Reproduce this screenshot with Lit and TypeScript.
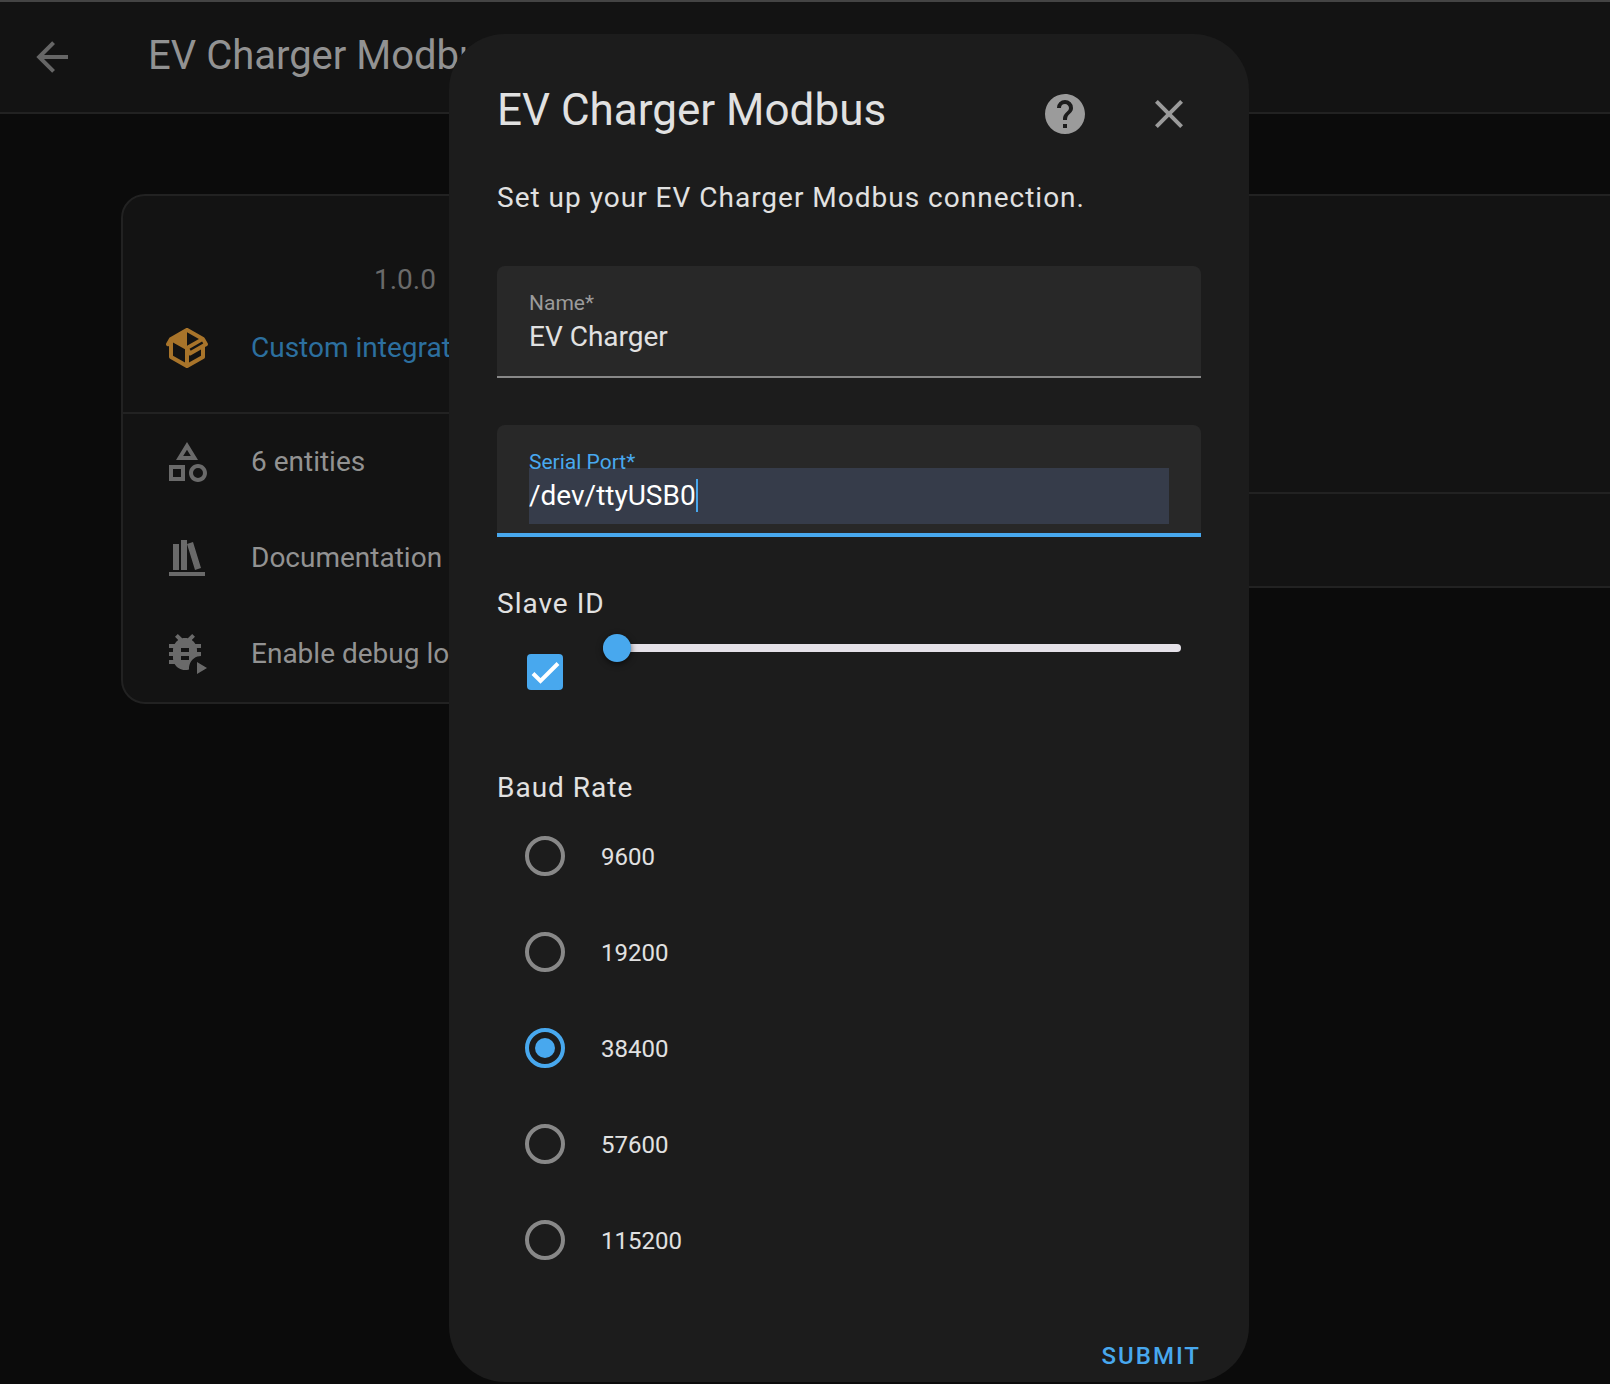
import { LitElement, html, css, svg } from "lit";
import { customElement, state } from "lit/decorators.js";

const ICONS = {
  back: "M20,11V13H8L13.5,18.5L12.08,19.92L4.16,12L12.08,4.08L13.5,5.5L8,11H20Z",
  help: "M15.07,11.25L14.17,12.17C13.45,12.89 13,13.5 13,15H11V14.5C11,13.39 11.45,12.39 12.17,11.67L13.41,10.41C13.78,10.05 14,9.55 14,9C14,7.89 13.1,7 12,7A2,2 0 0,0 10,9H8A4,4 0 0,1 12,5A4,4 0 0,1 16,9C16,9.88 15.64,10.67 15.07,11.25M13,19H11V17H13M12,2A10,10 0 0,0 2,12A10,10 0 0,0 12,22A10,10 0 0,0 22,12C22,6.47 17.5,2 12,2Z",
  close: "M19,6.41L17.59,5L12,10.59L6.41,5L5,6.41L10.59,12L5,17.59L6.41,19L12,13.41L17.59,19L19,17.59L13.41,12L19,6.41Z",
  package: "M2,10.96C1.5,10.68 1.35,10.07 1.63,9.59L3.13,7C3.24,6.8 3.41,6.66 3.6,6.58L11.43,2.18C11.59,2.06 11.79,2 12,2C12.21,2 12.41,2.06 12.57,2.18L20.47,6.62C20.66,6.72 20.82,6.88 20.91,7.08L22.36,9.6C22.64,10.08 22.47,10.69 22,10.96L21,11.54V16.5C21,16.88 20.79,17.21 20.47,17.38L12.57,21.82C12.41,21.94 12.21,22 12,22C11.79,22 11.59,21.94 11.43,21.82L3.53,17.38C3.21,17.21 3,16.88 3,16.5V10.96C2.7,11.13 2.32,11.14 2,10.96M12,4.15V4.15L12,10.85V10.85L17.96,7.5L12,4.15M5,15.91L11,19.29V12.58L5,9.21V15.91M19,15.91V12.69L14,15.59C13.67,15.77 13.3,15.76 13,15.6V19.29L19,15.91M13.85,13.36L20.13,9.73L19.55,8.72L13.27,12.35L13.85,13.36Z",
  shapes: "M11,13.5V21.5H3V13.5H11M9,15.5H5V19.5H9V15.5M12,2L17.5,11H6.5L12,2M12,5.86L10.08,9H13.92L12,5.86M17.5,13C20,13 22,15 22,17.5C22,20 20,22 17.5,22C15,22 13,20 13,17.5C13,15 15,13 17.5,13M17.5,15A2.5,2.5 0 0,0 15,17.5A2.5,2.5 0 0,0 17.5,20A2.5,2.5 0 0,0 20,17.5A2.5,2.5 0 0,0 17.5,15Z",
  books: "M9 3V18H12V3H9ZM12 5L16 18L19 17L15 4L12 5ZM5 5V18H8V5H5ZM3 19V21H21V19H3Z",
  bug: "M13,11H9V9H13ZM13,15H9V13H13ZM19,7H16.19C15.74,6.22 15.12,5.55 14.37,5.04L16,3.41L14.59,2L12.42,4.17C11.96,4.06 11.5,4 11,4C10.5,4 10.04,4.06 9.59,4.17L7.41,2L6,3.41L7.62,5.04C6.88,5.55 6.26,6.22 5.81,7H3V9H5.09C5.04,9.33 5,9.66 5,10V11H3V13H5V14C5,14.34 5.04,14.67 5.09,15H3V17H5.81C6.85,18.79 8.78,20 11,20C11.7,20 12.4,19.9 13,19.7C12.9,16.6 14.6,14.2 17.2,13.3C17.8,13.1 18.4,13 19,13V11H17V10C17,9.66 16.96,9.33 16.91,9H19V7ZM17,16V22L22,19Z",
};

const icon = (name: keyof typeof ICONS) => html`
  <svg class="icon" viewBox="0 0 24 24" aria-hidden="true">
    ${svg`<path fill="currentColor" fill-rule="evenodd" d=${ICONS[name]} />`}
  </svg>
`;

@customElement("integration-page")
class IntegrationPage extends LitElement {
  static styles = css`
    :host {
      display: block;
      color: #929292;
      font-size: 28px;
      line-height: 32px;
    }
    .icon {
      display: block;
      width: 48px;
      height: 48px;
      flex: none;
    }
    .toolbar {
      display: flex;
      align-items: center;
      gap: 72px;
      box-sizing: border-box;
      height: 114px;
      padding: 0 28px;
      background: #131313;
      border-top: 2px solid #444;
      border-bottom: 2px solid #222;
    }
    .back {
      padding: 0;
      border: 0;
      background: none;
      color: #666;
    }
    .heading {
      margin: 0;
      padding-bottom: 2px;
      font-size: 40px;
      font-weight: 400;
      line-height: 48px;
      white-space: nowrap;
    }
    .content {
      display: grid;
      grid-template-columns: minmax(0, 568px) minmax(0, 1fr);
      gap: 32px;
      align-items: start;
      padding: 80px 0 0 121px;
    }
    .card {
      background: #131313;
      border: 2px solid #222;
      border-radius: 24px;
      white-space: nowrap;
      overflow: hidden;
    }
    .wide {
      border-right: 0;
      border-radius: 24px 0 0 24px;
    }
    .intro {
      padding: 68px 0 16px;
      border-bottom: 2px solid #222;
    }
    .version {
      margin: 0;
      text-align: center;
      color: #6a6a6a;
    }
    .row {
      display: flex;
      align-items: center;
      gap: 40px;
      height: 96px;
      padding: 0 40px;
      color: inherit;
      text-decoration: none;
    }
    .row .icon {
      color: #6a6a6a;
    }
    .intro .row {
      padding-top: 4px;
      color: #2c6f9f;
    }
    .intro .icon {
      color: #a8742a;
    }
    .summary {
      height: 296px;
      border-bottom: 2px solid #222;
    }
    .entry {
      height: 92px;
    }
  `;

  render() {
    return html`
      <header class="toolbar">
        <button class="back" type="button" aria-label="Back">${icon("back")}</button>
        <h1 class="heading">EV Charger Modbus</h1>
      </header>
      <main class="content">
        <section class="card">
          <div class="intro">
            <p class="version">1.0.0</p>
            <a class="row" href="#custom">${icon("package")}<span>Custom integration</span></a>
          </div>
          <a class="row" href="#entities">${icon("shapes")}<span>6 entities</span></a>
          <a class="row" href="#docs">${icon("books")}<span>Documentation</span></a>
          <a class="row" href="#debug">${icon("bug")}<span>Enable debug logging</span></a>
        </section>
        <section class="card wide">
          <div class="summary"></div>
          <div class="entry"></div>
        </section>
      </main>
    `;
  }
}

@customElement("config-dialog")
class ConfigDialog extends LitElement {
  @state() private baud = "38400";

  private rates = ["9600", "19200", "38400", "57600", "115200"];

  static styles = css`
    :host {
      display: block;
      box-sizing: border-box;
      width: 800px;
      max-width: 100%;
      padding-top: 32px;
      background: #1c1c1c;
      border-radius: 56px;
      color: #e1e1e1;
      font-size: 28px;
      line-height: 32px;
      letter-spacing: 1px;
    }
    .icon {
      display: block;
      width: 48px;
      height: 48px;
    }
    .header {
      display: flex;
      align-items: flex-start;
      gap: 8px;
      padding: 0 32px 0 48px;
    }
    .title {
      flex: 1;
      margin: 0;
      font-size: 44px;
      font-weight: 400;
      line-height: 88px;
      letter-spacing: normal;
    }
    .tool {
      padding: 24px;
      border: 0;
      background: none;
      color: #9b9b9b;
    }
    .form {
      padding: 12px 48px 0;
    }
    .description {
      margin: 0 0 44px;
      line-height: 48px;
    }
    .field {
      box-sizing: border-box;
      height: 112px;
      margin-bottom: 47px;
      padding: 25px 32px 0;
      background: #282828;
      border-bottom: 2px solid #888;
      border-radius: 8px 8px 0 0;
      letter-spacing: normal;
    }
    .field-label {
      display: block;
      position: relative;
      margin-bottom: -6px;
      color: #9b9b9b;
      font-size: 21px;
      line-height: 24px;
    }
    .value {
      display: flex;
      align-items: center;
      box-sizing: border-box;
      height: 56px;
      padding-bottom: 2px;
    }
    .text {
      box-sizing: border-box;
      width: 100%;
      height: 33px;
      padding: 0;
      border: 0;
      outline: 0;
      background: none;
      color: inherit;
      font: inherit;
    }
    .active {
      border-bottom: 4px solid #48a8ee;
    }
    .active .field-label {
      color: #48a8ee;
    }
    .active .value {
      background: #363c4a;
      color: #fff;
    }
    .active .text {
      width: auto;
      field-sizing: content;
      border-right: 2px solid #48a8ee;
    }
    .group {
      margin: 0;
      padding: 0;
      border: 0;
    }
    .group-label {
      display: block;
      padding: 0;
    }
    .slave {
      padding-top: 4px;
    }
    .slave-row {
      display: flex;
      align-items: flex-start;
      gap: 40px;
      padding: 0 20px 82px 30px;
    }
    .check {
      display: grid;
      flex: none;
      width: 36px;
      height: 36px;
      margin-top: 34px;
    }
    .check-box,
    .check-mark {
      grid-area: 1 / 1;
      width: 36px;
      height: 36px;
      margin: 0;
    }
    .check-box {
      appearance: none;
      box-sizing: border-box;
      border: 4px solid #888;
      border-radius: 4px;
    }
    .check-box:checked {
      border: 0;
      background: #48a8ee;
    }
    .check-mark {
      pointer-events: none;
    }
    .slider {
      appearance: none;
      flex: 1;
      min-width: 0;
      height: 56px;
      margin: 0;
      background: none;
    }
    .slider::-webkit-slider-runnable-track {
      height: 8px;
      border-radius: 4px;
      background: #e5e1e8;
    }
    .slider::-webkit-slider-thumb {
      appearance: none;
      width: 28px;
      height: 28px;
      margin-top: -10px;
      border-radius: 50%;
      background: #48a8ee;
      box-shadow: 0 2px 6px rgba(0, 0, 0, 0.6);
    }
    .rates {
      padding-top: 4px;
    }
    .rate {
      display: flex;
      align-items: center;
      gap: 36px;
      height: 96px;
      padding-left: 28px;
      font-size: 24px;
      letter-spacing: normal;
    }
    .rate-text {
      padding-top: 2px;
    }
    .radio {
      appearance: none;
      box-sizing: border-box;
      width: 40px;
      height: 40px;
      margin: 0;
      padding: 6px;
      border: 4px solid #888;
      border-radius: 50%;
    }
    .radio:checked {
      border-color: #48a8ee;
      background: #48a8ee content-box;
    }
    .footer {
      display: flex;
      justify-content: flex-end;
      padding: 42px 48px 0;
    }
    .submit {
      height: 52px;
      padding: 0;
      border: 0;
      background: none;
      color: #48a8ee;
      font: inherit;
      font-size: 24px;
      font-weight: 500;
      letter-spacing: 2px;
      text-transform: uppercase;
    }
  `;

  render() {
    return html`
      <header class="header">
        <h2 class="title">EV Charger Modbus</h2>
        <button class="tool" type="button" aria-label="Help">${icon("help")}</button>
        <button class="tool" type="button" aria-label="Close">${icon("close")}</button>
      </header>
      <div class="form">
        <p class="description">Set up your EV Charger Modbus connection.</p>
        <div class="field">
          <label class="field-label" for="name">Name*</label>
          <div class="value"><input class="text" id="name" type="text" value="EV Charger" /></div>
        </div>
        <div class="field active">
          <label class="field-label" for="port">Serial Port*</label>
          <div class="value"><input class="text" id="port" type="text" value="/dev/ttyUSB0" /></div>
        </div>
        <div class="slave">
          <label class="group-label" for="slave">Slave ID</label>
          <div class="slave-row">
            <div class="check">
              <input class="check-box" type="checkbox" checked aria-label="Use Slave ID" />
              <svg class="check-mark" viewBox="0 0 36 36" aria-hidden="true">
                <path d="M6 19.5L13.5 27L31 9.5" fill="none" stroke="#fff" stroke-width="4" />
              </svg>
            </div>
            <input class="slider" id="slave" type="range" min="1" max="247" value="1" />
          </div>
        </div>
        <fieldset class="group">
          <legend class="group-label">Baud Rate</legend>
          <div class="rates">
            ${this.rates.map(
              (rate) => html`
                <label class="rate">
                  <input
                    class="radio"
                    type="radio"
                    name="baud"
                    .checked=${rate === this.baud}
                    @change=${() => (this.baud = rate)}
                  />
                  <span class="rate-text">${rate}</span>
                </label>
              `
            )}
          </div>
        </fieldset>
      </div>
      <footer class="footer">
        <button class="submit" type="submit">Submit</button>
      </footer>
    `;
  }
}

@customElement("app-root")
class AppRoot extends LitElement {
  static styles = css`
    :host {
      display: block;
      position: relative;
      min-height: 100vh;
      background: #0b0b0b;
      font-family: Roboto, "Liberation Sans", sans-serif;
    }
    .overlay {
      position: absolute;
      inset: 0;
      display: flex;
      justify-content: center;
      align-items: flex-start;
      padding: 34px 0 0 88px;
    }
  `;

  render() {
    return html`
      <integration-page></integration-page>
      <div class="overlay">
        <config-dialog role="dialog" aria-label="EV Charger Modbus"></config-dialog>
      </div>
    `;
  }
}
